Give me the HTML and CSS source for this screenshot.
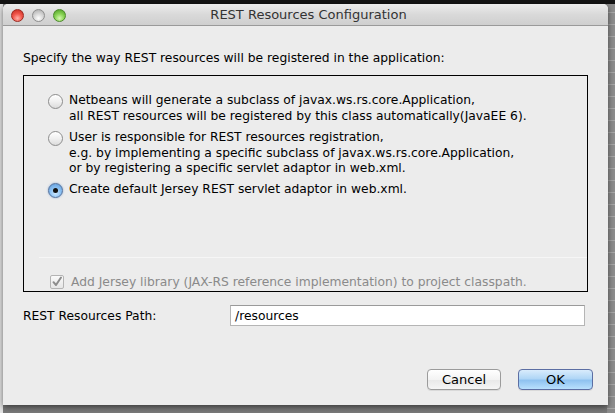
FILE: index.html
```html
<!DOCTYPE html>
<html>
<head>
<meta charset="utf-8">
<link rel="stylesheet" href="styles.css">
</head>
<body>
<div class="screen">
  <div class="window">
    <div class="titlebar">
      <div class="lights">
        <span class="light red"></span>
        <span class="light gray"></span>
        <span class="light green"></span>
      </div>
      <div class="title">REST Resources Configuration</div>
    </div>
    <div class="content">
      <div class="intro">Specify the way REST resources will be registered in the application:</div>
      <div class="panel">
        <div class="options">
          <div class="option">
            <span class="radio"></span>
            <div class="text">Netbeans will generate a subclass of javax.ws.rs.core.Application,<br>all REST resources will be registered by this class automatically(JavaEE 6).</div>
          </div>
          <div class="option">
            <span class="radio"></span>
            <div class="text">User is responsible for REST resources registration,<br>e.g. by implementing a specific subclass of javax.ws.rs.core.Application,<br>or by registering a specific servlet adaptor in web.xml.</div>
          </div>
          <div class="option">
            <span class="radio on"></span>
            <div class="text">Create default Jersey REST servlet adaptor in web.xml.</div>
          </div>
        </div>
        <div class="sep"></div>
        <div class="check-row">
          <span class="checkbox"><svg width="12" height="12" viewBox="0 0 12 12"><path d="M2.5 6.2 L5 9 L10 1.5" fill="none" stroke="#8d8d8d" stroke-width="2" stroke-linecap="round" stroke-linejoin="round"/></svg></span>
          <span class="check-label">Add Jersey library (JAX-RS reference implementation) to project classpath.</span>
        </div>
      </div>
      <div class="path-row">
        <span class="path-label">REST Resources Path:</span>
        <div class="field">/resources</div>
      </div>
      <div class="buttons">
        <div class="btn">Cancel</div>
        <div class="btn default">OK</div>
      </div>
    </div>
  </div>
</div>
</body>
</html>
```
FILE: styles.css
```css
* { box-sizing: border-box; }
html, body { margin: 0; padding: 0; }
body {
  width: 615px;
  height: 413px;
  overflow: hidden;
  font-family: "DejaVu Sans", sans-serif;
  font-size: 12.3px;
  color: #000;
}
.screen {
  width: 615px;
  height: 413px;
  padding: 4px 7px 8px 3px;
  background:
    linear-gradient(#141414 0 4px, transparent 4px),
    linear-gradient(to right, #e4e4e4 0 3px, transparent 3px),
    repeating-linear-gradient(#a9a9a9 0 1px, #8e8e8e 1px 12px) right top / 8px 100% no-repeat,
    linear-gradient(#8a8a8a, #7a7a7a);
}
.window {
  width: 605px;
  height: 401px;
  background: #ececec;
  border-radius: 5px 5px 0 0;
  box-shadow: 0 2px 6px rgba(0,0,0,0.55);
  display: flex;
  flex-direction: column;
  overflow: hidden;
}
.titlebar {
  height: 22px;
  flex: none;
  position: relative;
  background: linear-gradient(#ececec, #d9d9d9 50%, #cfcfcf);
  border-bottom: 1px solid #9a9a9a;
  display: flex;
  align-items: center;
  justify-content: center;
}
.lights {
  position: absolute;
  left: 8px;
  top: 5px;
  display: flex;
  gap: 8px;
}
.light {
  width: 13px;
  height: 13px;
  border-radius: 50%;
  display: block;
}
.light.red {
  background: radial-gradient(circle at 50% 75%, #ffb0a8 0, #f2584c 45%, #c1271d 100%);
  border: 1px solid #9c2a22;
}
.light.gray {
  background: radial-gradient(circle at 50% 75%, #ffffff 0, #d8d8d8 45%, #a9a9a9 100%);
  border: 1px solid #8e8e8e;
}
.light.green {
  background: radial-gradient(circle at 50% 75%, #d6f7b4 0, #8ad456 45%, #4a9a22 100%);
  border: 1px solid #4c8a2b;
}
.title {
  font-size: 13px;
  color: #333;
  margin-left: 6px;
}
.content {
  flex: 1;
  padding: 24px 0 0 20px;
  display: flex;
  flex-direction: column;
}
.intro {
  height: 16px;
  line-height: 16px;
}
.panel {
  margin-top: 9px;
  width: 565px;
  height: 217px;
  border: 1px solid #000;
  display: flex;
  flex-direction: column;
  padding: 17px 0 0 0;
}
.options {
  display: flex;
  flex-direction: column;
  gap: 6px;
  padding-left: 24px;
}
.option {
  display: flex;
  align-items: flex-start;
  gap: 6px;
}
.option:last-child {
  margin-top: -1px;
}
.text {
  line-height: 15.5px;
}
.radio {
  flex: none;
  width: 15px;
  height: 15px;
  margin-top: 1px;
  border-radius: 50%;
  border: 1px solid #8c8c8c;
  background: linear-gradient(#ffffff, #f0f0f0 50%, #dcdcdc);
  box-shadow: inset 0 1px 1px rgba(255,255,255,0.9);
  position: relative;
}
.radio.on {
  border-color: #52709c;
  background: radial-gradient(circle at 50% 70%, #cfe9ff 0, #8dc2f3 45%, #5a97d8 100%);
  box-shadow: 0 0 2px rgba(60,120,200,0.6);
}
.radio.on::after {
  content: "";
  position: absolute;
  left: 4px;
  top: 4px;
  width: 5px;
  height: 5px;
  border-radius: 50%;
  background: #111;
}
.sep {
  margin-top: auto;
  margin-left: 15px;
  height: 1px;
  background: #d6d6d6;
  border-bottom: 1px solid #f6f6f6;
}
.check-row {
  display: flex;
  align-items: center;
  gap: 7px;
  padding: 16px 0 1px 26px;
}
.checkbox {
  width: 14px;
  height: 14px;
  border: 1px solid #b4b4b4;
  border-radius: 2px;
  background: linear-gradient(#fafafa, #e6e6e6);
  display: flex;
  align-items: center;
  justify-content: center;
}
.check-label {
  color: #8a8a8a;
  line-height: 16px;
}
.path-row {
  margin-top: 13px;
  display: flex;
  align-items: center;
  width: 565px;
}
.path-label {
  width: 207px;
}
.field {
  width: 355px;
  height: 21px;
  background: #fff;
  border: 1px solid #b5b5b5;
  border-top-color: #9a9a9a;
  padding: 1px 4px;
  line-height: 18px;
}
.buttons {
  margin-top: 43px;
  display: flex;
  gap: 17px;
  padding-left: 404px;
}
.btn {
  width: 74px;
  height: 21px;
  border: 1px solid #9b9b9b;
  border-radius: 4px;
  background: linear-gradient(#ffffff, #f3f3f3 50%, #e8e8e8 51%, #f5f5f5);
  text-align: center;
  line-height: 19px;
  font-size: 13px;
  box-shadow: 0 1px 0 rgba(0,0,0,0.08);
}
.btn.default {
  width: 75px;
  border-color: #5c6ea3;
  background: linear-gradient(#d9ecfc, #b0d6f6 45%, #8fc2f0 55%, #b9e0fd);
}
```
